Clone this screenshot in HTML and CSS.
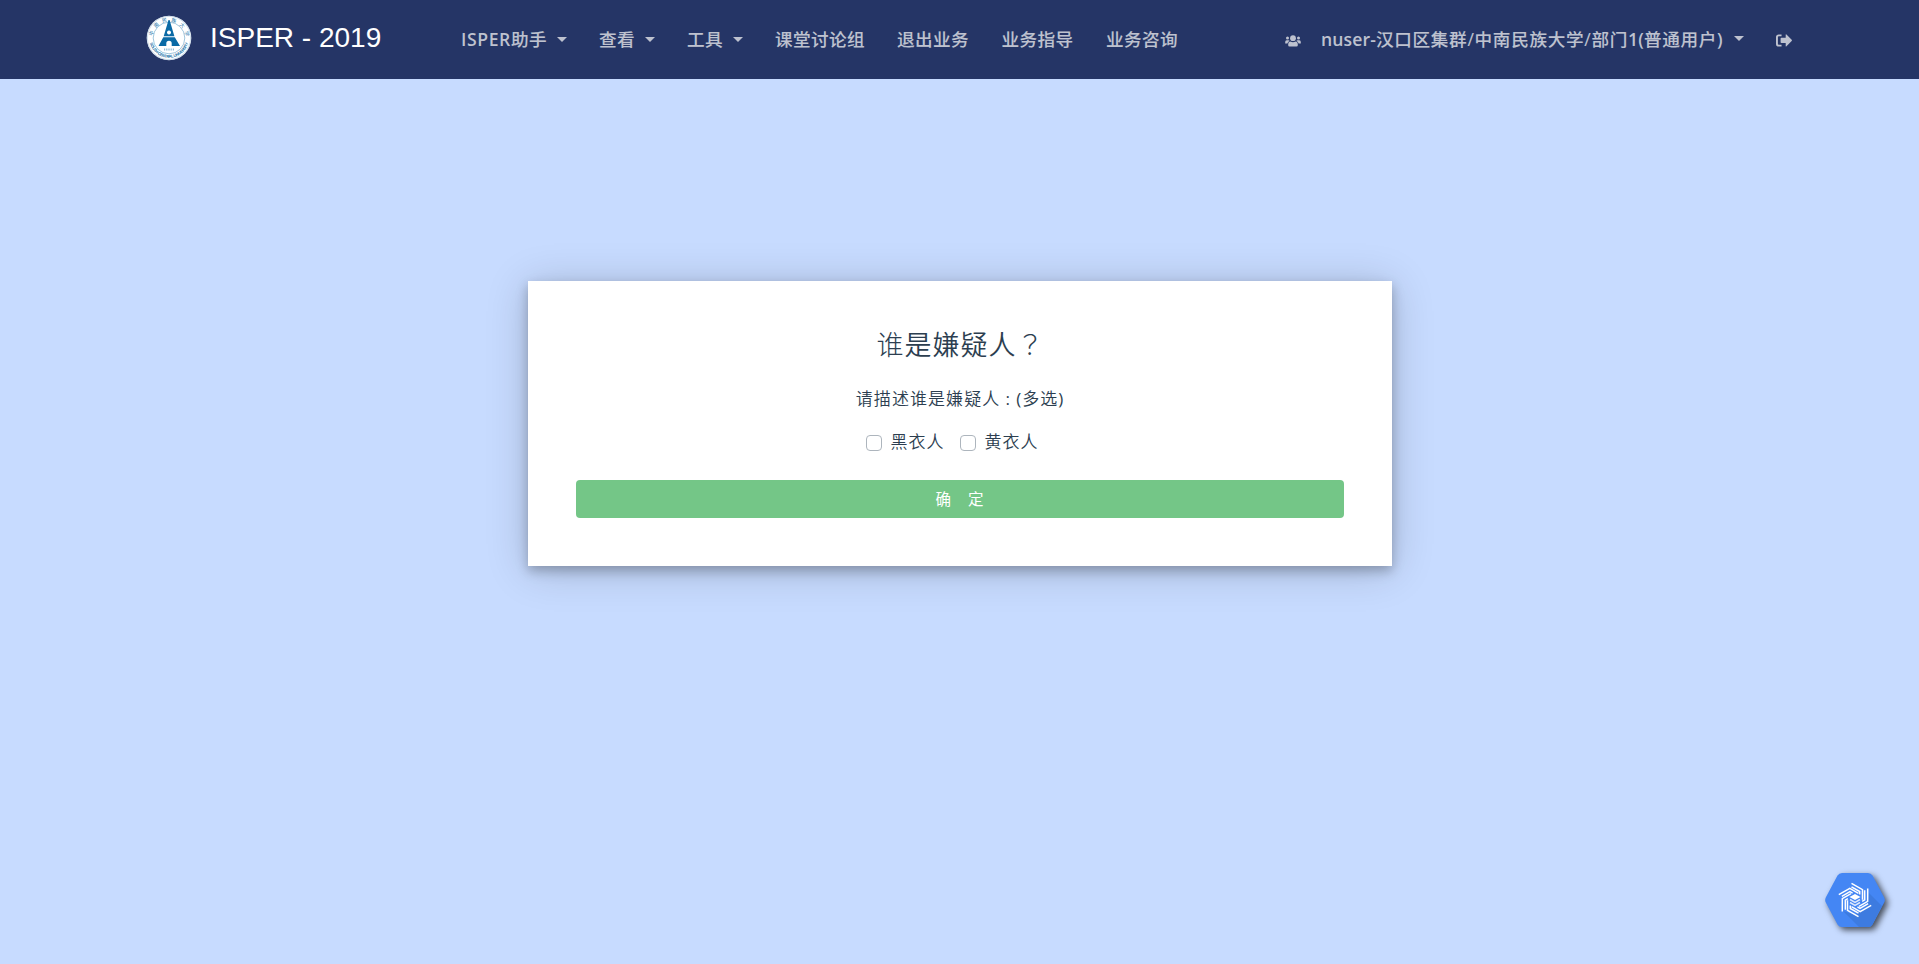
FILE: index.html
```html
<!DOCTYPE html>
<html lang="zh-CN">
<head>
<meta charset="utf-8">
<title>ISPER - 2019</title>
<link rel="stylesheet" href="styles.css">
</head>
<body>
<header class="navbar">
  <a class="brand">
    <svg class="seal" viewBox="0 0 46 46">
      <defs>
        <path id="arcTop" d="M6.500 23a16.500 16.500 0 0 1 33 0"/>
        <path id="arcBottom" d="M3.200 23a19.800 19.800 0 0 0 39.600 0"/>
      </defs>
      <circle cx="23" cy="23" r="22.300" fill="#fff"/>
      <circle cx="23" cy="23" r="21.600" fill="none" stroke="#a9c5da" stroke-width=".6"/>
      <circle cx="23" cy="23" r="15.800" fill="none" stroke="#5f9fc6" stroke-width=".6"/>
      <text class="seal-top"><textPath href="#arcTop" startOffset="2" textLength="48">中南民族大学</textPath></text>
      <text class="seal-bottom"><textPath href="#arcBottom" startOffset="5" textLength="52">SOUTH-CENTRAL UNIVERSITY</textPath></text>
      <path fill="#0a6aa6" fill-rule="evenodd" d="M22.500 5h1.100l4.800 16.200H17.700zM23 15.500a2 2 0 1 0 .01 0zM17.300 22.300h11.500L34 31H25.700v-2.500a2.700 2.700 0 0 0-5.400 0V31H12.500z"/>
      <path fill="none" stroke="#8fbcd8" stroke-width="2" stroke-dasharray="1 .8" d="M18 34.500h10"/>
    </svg>
    <span class="brand-name">ISPER - 2019</span>
  </a>
  <nav class="menu">
    <a class="w138"><span class="latin isper">ISPER</span>助手<i class="caret"></i></a>
    <a class="w88">查看<i class="caret"></i></a>
    <a class="w88">工具<i class="caret"></i></a>
    <a class="w122">课堂讨论组</a>
    <a class="w104">退出业务</a>
    <a class="w104">业务指导</a>
    <a class="w104">业务咨询</a>
  </nav>
  <div class="account">
    <svg class="users" viewBox="0 0 16 12" fill="currentColor">
      <circle cx="8" cy="3.200" r="2.900"/><circle cx="2.500" cy="3.100" r="1.500"/><circle cx="13.500" cy="3.100" r="1.500"/>
      <path d="M5.300 6.500q2.700 1.300 5.400 0 2.100.3 2.100 2.500v1.200q0 1.300-1.300 1.300h-7q-1.300 0-1.300-1.300V9q0-2.200 2.100-2.500zM1.600 5.300h2q.7.100 1 .6-1.900.8-2.200 2.600H.2V6.900q0-1.600 1.400-1.600zM12.400 5.300h2q1.400 0 1.400 1.600v1.600h-2.200q-.3-1.800-2.200-2.600.3-.5 1-.6z"/>
    </svg>
    <a class="user"><span class="latin">nuser-</span>汉口区集群/中南民族大学/部门<span class="latin">1(</span>普通用户<span class="latin">)</span></a><i class="caret caret-user"></i>
    <svg class="logout" viewBox="0 0 15 12" fill="currentColor">
      <path d="M5.200.3v1.800H2.700q-.9 0-.9.900v6q0 .9.900.9h2.500v1.800H2.600Q0 11.700 0 9.200V2.800Q0 .3 2.600.3z"/>
      <path d="M9.100.6Q9.100-.3 9.800.3l4.900 5q.5.600 0 1.200l-4.900 5q-.7.600-.7-.3V8.300H5q-.7 0-.7-.7V4.200q0-.7.700-.7h4.100z"/>
    </svg>
  </div>
</header>
<main class="page">
  <form class="card">
    <h1 class="title">谁<span class="firm">是嫌疑人</span><span class="mark" lang="zh-TW">？</span></h1>
    <p class="question">请描述谁是嫌疑人<span class="paren"> : (</span>多选<span class="paren">)</span></p>
    <div class="options">
      <label class="option"><span class="box"></span>黑衣人</label>
      <label class="option"><span class="box"></span>黄衣人</label>
    </div>
    <button class="submit" type="button">确<span class="gap"></span>定</button>
  </form>
</main>
<div class="badge">
  <svg class="badge-icon" viewBox="0 0 60 54">
    <path fill="#4486f4" d="M17 0h26q3 0 4.500 2.500l11.600 21.700q1.500 2.800 0 5.600L47.500 51.500Q46 54 43 54H17q-3 0-4.500-2.500L.9 29.800q-1.500-2.800 0-5.600L12.500 2.500Q14 0 17 0z"/>
    <path fill="#3d7be0" d="M44 20l13 13-9.500 18.500Q46 54 43 54H34L18 38l12 4 12-9z"/>
    <g fill="none" stroke="#fff" stroke-width="1.500">
      <g id="blade"><path d="M26.500 10.300l11 6.400v10M26.500 13.800l8.200 4.700v3"/></g>
      <use href="#blade" transform="rotate(60 30 27)"/>
      <use href="#blade" transform="rotate(120 30 27)"/>
      <use href="#blade" transform="rotate(180 30 27)"/>
      <use href="#blade" transform="rotate(240 30 27)"/>
      <use href="#blade" transform="rotate(300 30 27)"/>
    </g>
    <path fill="#fff" d="M30 21l5.500 3-5.500 3-5.500-3z"/>
    <path fill="none" stroke="#dce8fd" stroke-width="1.500" d="M25 26.500l5 2.800 5-2.800M25 29.500l5 2.800 5-2.800"/>
  </svg>
</div>
</body>
</html>
```
FILE: styles.css
```css
* { box-sizing: border-box; }
body {
  margin: 0;
  height: 964px;
  overflow: hidden;
  background: #c7dbff;
  color: #2c3e50;
  font-family: "Open Sans", "Noto Sans CJK SC", sans-serif;
}
.navbar {
  display: flex;
  align-items: center;
  height: 79px;
  padding: 0 127px 2px 146px;
  background: #253566;
  color: #bec2cf;
}
.brand { display: flex; align-items: center; width: 315px; height: 76px; color: #fff; align-self: flex-start; }
.seal { width: 46px; height: 46px; margin-right: 18px; }
.seal-top { font: 5px "Noto Sans CJK SC", sans-serif; fill: #2878aa; }
.seal-bottom { font: bold 4.200px "Liberation Sans", sans-serif; fill: #2878aa; }
.brand-name { font: 28px "Liberation Sans", Arial, sans-serif; white-space: nowrap; }
.menu { display: flex; font-size: 17.600px; font-weight: 500; letter-spacing: .4px; white-space: nowrap; -webkit-text-stroke: .1px currentColor; }
.menu a { display: flex; align-items: center; }
.latin { font-weight: 600; letter-spacing: .1px; -webkit-text-stroke: 0; }
.isper { letter-spacing: .6px; }
.w138 { width: 138px; }
.w88 { width: 88px; }
.w122 { width: 122px; }
.w104 { width: 104.500px; }
.caret {
  width: 0;
  height: 0;
  margin: 2px 0 0 10px;
  border: 5px solid transparent;
  border-top-color: currentColor;
  border-bottom: 0;
}
.account { display: flex; align-items: center; margin-left: auto; font-size: 17.600px; font-weight: 500; white-space: nowrap; -webkit-text-stroke: .1px currentColor; }
.user { width: 404px; letter-spacing: .7px; }
.users { width: 16px; height: 12px; margin: 4px 20px 0 0; }
.caret-user { margin: 0 0 0 9px; }
.logout { width: 16px; height: 13px; margin: 4px 0 0 32px; }
.page { display: flex; justify-content: center; padding-top: 202px; }
.card {
  width: 864px;
  height: 285px;
  padding: 44px 48px 48px;
  background: #fff;
  text-align: center;
  box-shadow: 0 5px 11px rgba(0, 0, 0, .25), 0 4px 40px rgba(0, 0, 0, .19);
}
.title { height: 40px; margin: 0; padding-left: 2px; font-size: 27px; line-height: 40px; font-weight: 300; letter-spacing: 1px; }
.firm { font-weight: 350; }
.mark { font-family: "Noto Sans CJK TC", sans-serif; font-weight: 300; line-height: 1; }
.question { margin: 21px 0 0; padding-left: 1px; font-size: 17px; line-height: 26px; font-weight: 350; letter-spacing: 1.060px; }
.paren { font-weight: 400; letter-spacing: .9px; }
.options { display: flex; justify-content: center; gap: 15px; margin: 17px 15px 0 0; font-size: 17px; line-height: 26px; font-weight: 350; letter-spacing: 1px; }
.option { display: flex; align-items: center; }
.box { width: 16px; height: 16px; margin: 2px 9px 0 0; border: 1px solid #adb5bd; border-radius: 4px; }
.submit {
  display: flex;
  align-items: center;
  justify-content: center;
  width: 768px;
  height: 38px;
  margin-top: 25px;
  padding: 0 0 3px;
  border: 0;
  border-radius: 4px;
  background: #74c687;
  color: #fff;
  font: 15.500px "Noto Sans CJK SC", sans-serif;
}
.gap { width: 17px; }
.badge { position: absolute; left: 1825px; top: 873px; width: 60px; height: 54px; }
.badge-icon { display: block; width: 60px; height: 54px; filter: drop-shadow(3px 3px 3px rgba(0, 0, 0, .65)); }
```
